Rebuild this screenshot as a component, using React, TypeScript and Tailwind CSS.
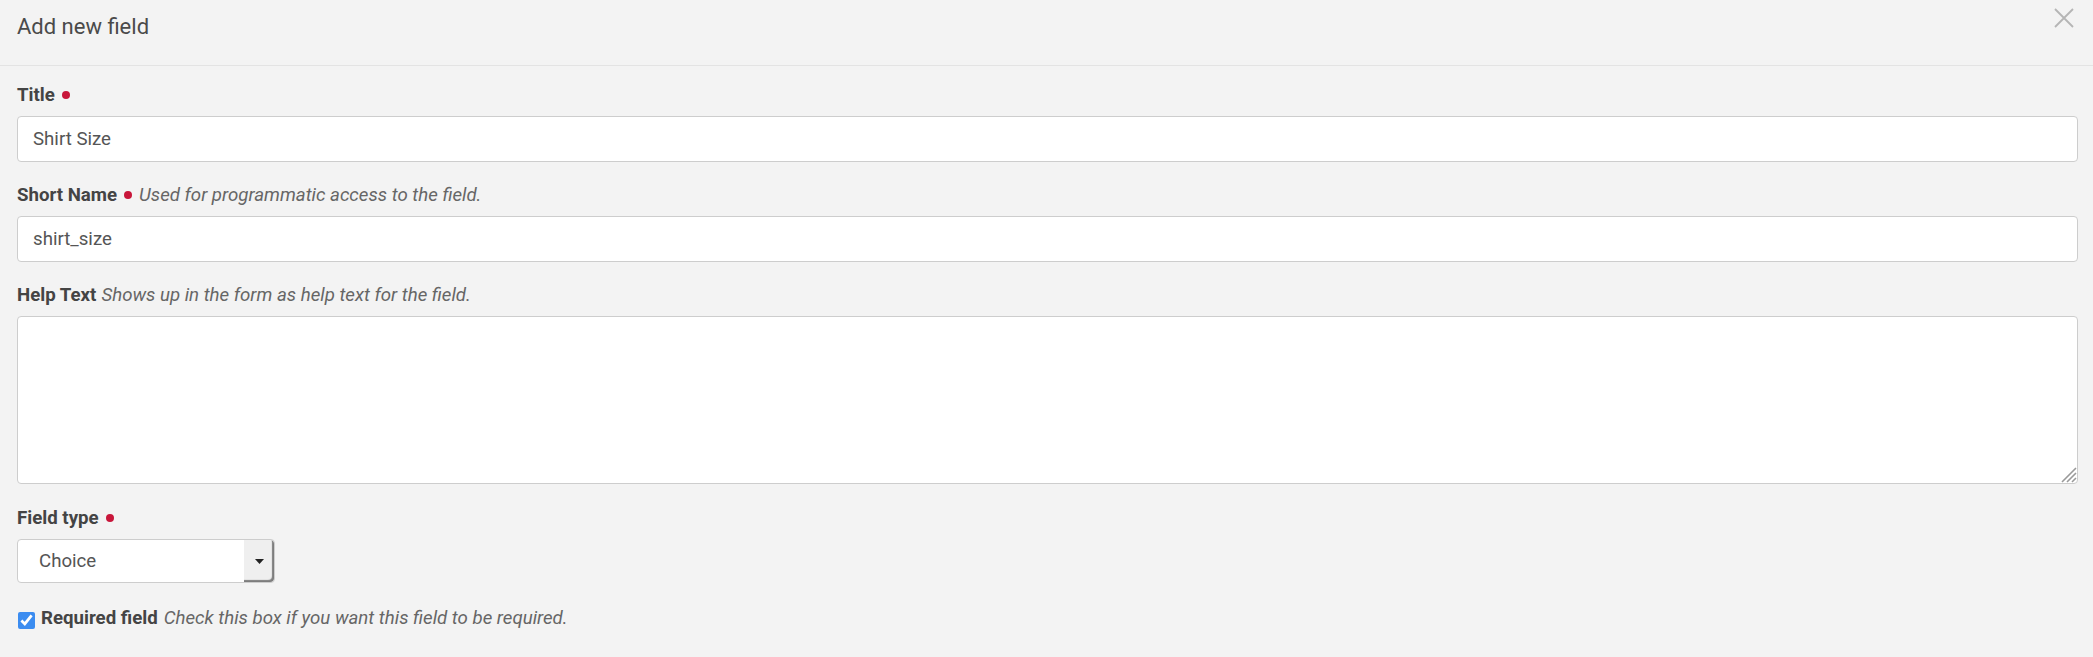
import { useState } from "react";

// Modal body for adding a custom field
function Dot() {
  return <span className="inline-block w-[8px] h-[8px] rounded-full bg-[#c8163a]" />;
}

function Label({ text, required, hint }: { text: string; required?: boolean; hint?: string }) {
  return (
    <div className="flex items-center gap-[7px] leading-[26px] mb-[8px]">
      <span className="font-bold text-[#444]">{text}</span>
      {required && <Dot />}
      {hint && <span className={required ? "italic text-[#666]" : "italic text-[#666] -ml-[2px]"}>{hint}</span>}
    </div>
  );
}

export default function App() {
  const [title, setTitle] = useState("Shirt Size");
  const [shortName, setShortName] = useState("shirt_size");
  const [help, setHelp] = useState("");
  const [required, setRequired] = useState(true);

  return (
    <div className="min-h-screen w-full bg-[#f3f3f3] text-[18.67px] font-['Roboto',sans-serif]">
      {/* Header */}
      <div className="flex items-start justify-between h-[66px] border-b border-[#e3e3e3] pl-[17px] pr-[19px]">
        <h2 className="pt-[12px] text-[22px] leading-[30px] text-[#4a4a4a] font-normal">Add new field</h2>
        <button className="mt-[8px] text-[#b5b5b5]" aria-label="Close">
          <svg width="20" height="20" viewBox="0 0 20 20" fill="none" stroke="currentColor" strokeWidth="1.8">
            <path d="M1 1 19 19M19 1 1 19" />
          </svg>
        </button>
      </div>

      {/* Form */}
      <div className="pt-[16px] pl-[17px] pr-[15px]">
        <div className="mb-[20px]">
          <Label text="Title" required />
          <input
            value={title}
            onChange={e => setTitle(e.target.value)}
            className="w-full h-[46px] bg-white border border-[#cdcdcd] rounded-[4px] pl-[15px] text-[#555] outline-none"
          />
        </div>

        <div className="mb-[20px]">
          <Label text="Short Name" required hint="Used for programmatic access to the field." />
          <input
            value={shortName}
            onChange={e => setShortName(e.target.value)}
            className="w-full h-[46px] bg-white border border-[#cdcdcd] rounded-[4px] pl-[15px] text-[#555] outline-none"
          />
        </div>

        <div className="mb-[21px]">
          <Label text="Help Text" hint="Shows up in the form as help text for the field." />
          <div className="relative">
            <textarea
              value={help}
              onChange={e => setHelp(e.target.value)}
              className="block w-full h-[168px] bg-white border border-[#cdcdcd] rounded-[4px] px-[15px] py-[8px] text-[#555] outline-none resize-none"
            />
            {/* resize grip */}
            <svg
              className="absolute right-[1px] bottom-[1px] pointer-events-none"
              width="20" height="20" viewBox="0 0 20 20" stroke="#9a9a9a" strokeWidth="1.6"
            >
              <path d="M19 5 5 19M19 10 10 19M19 15 15 19" />
            </svg>
          </div>
        </div>

        <div className="mb-[22px]">
          <Label text="Field type" required />
          <div className="flex w-[258px] h-[44px] bg-white border border-[#cdcdcd] rounded-[4px]">
            <div className="flex-1 flex items-center pl-[21px] text-[#555]">Choice</div>
            <div className="w-[30px] flex items-center justify-center bg-[#efefef] rounded-r-[4px] shadow-[inset_-2px_-2px_1px_#7d7d7d]">
              <svg width="9" height="5" viewBox="0 0 9 5">
                <path d="M0 0h9L4.5 5z" fill="#222" />
              </svg>
            </div>
          </div>
        </div>

        <label className="flex items-center gap-[6px] leading-[26px]">
          <input
            type="checkbox"
            checked={required}
            onChange={e => setRequired(e.target.checked)}
            className="w-[17px] h-[17px] m-0 ml-[1px] mt-[5px] accent-[#3b8cf0]"
          />
          <span className="font-bold text-[#444]">Required field</span>
          <span className="italic text-[#666]">Check this box if you want this field to be required.</span>
        </label>
      </div>
    </div>
  );
}
